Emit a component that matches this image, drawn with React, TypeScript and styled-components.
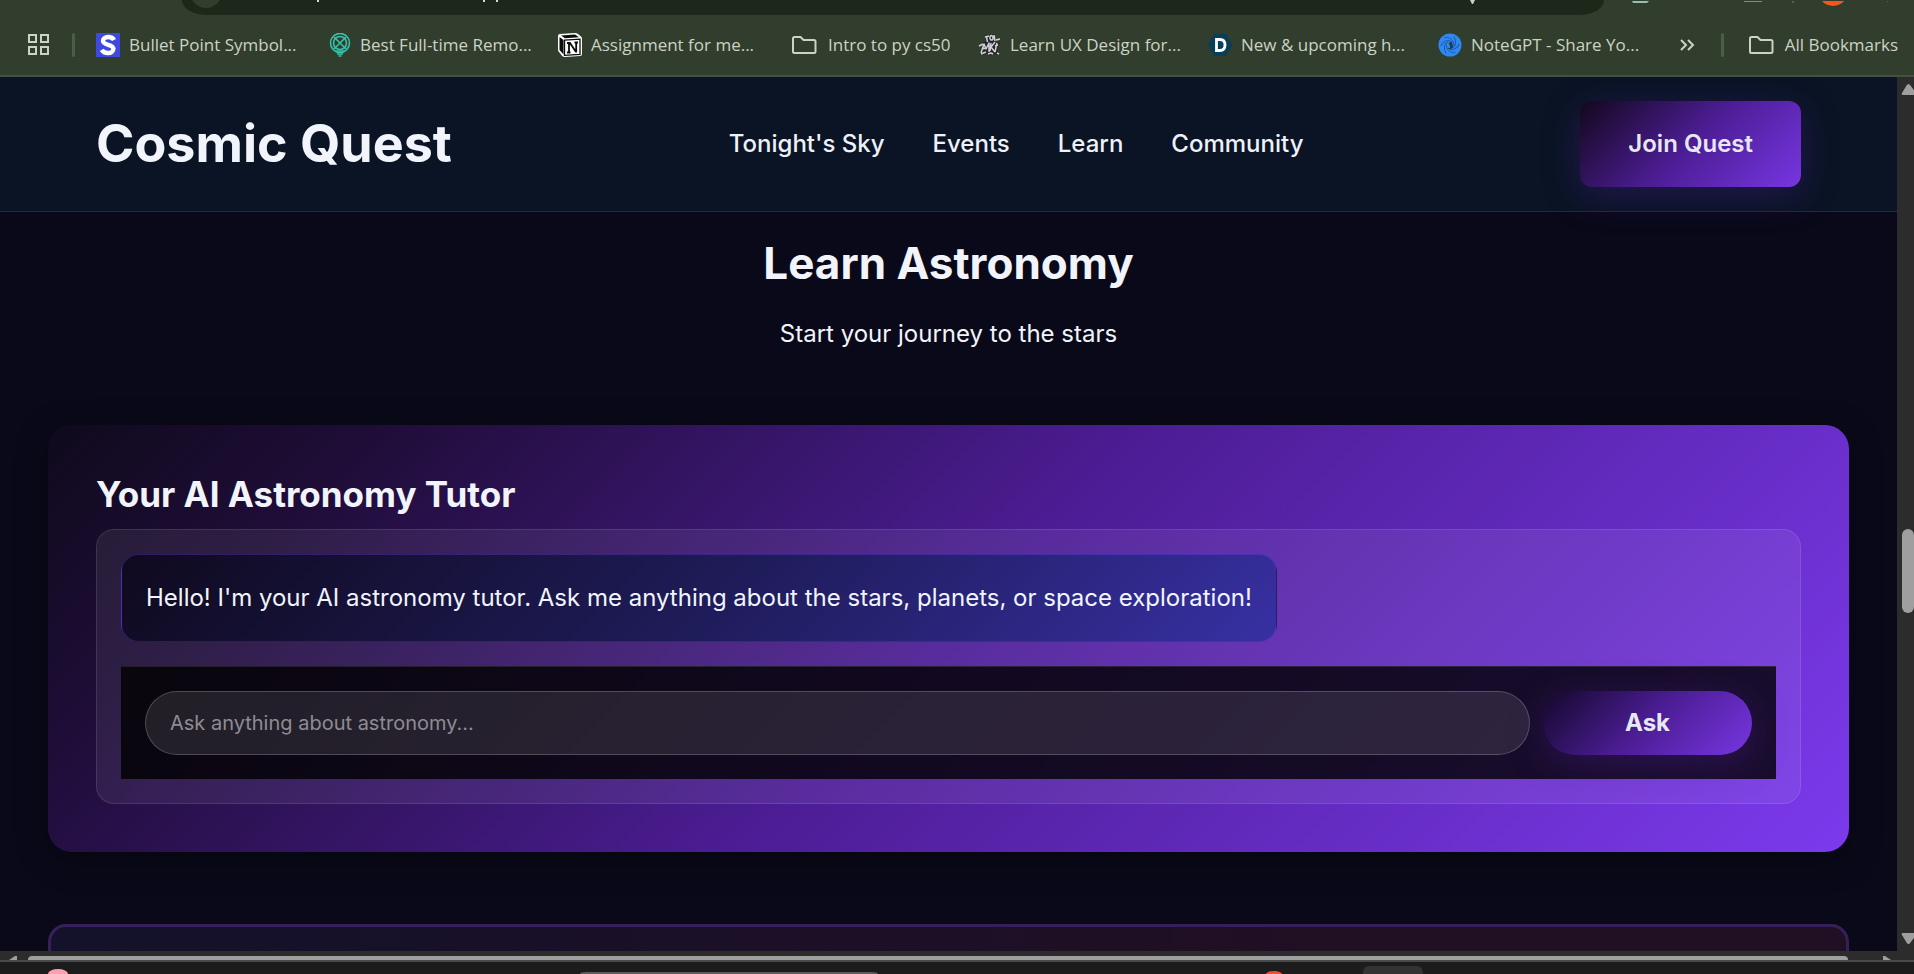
import React from "react";
import styled, { createGlobalStyle } from "styled-components";

const Global = createGlobalStyle`
  *, *::before, *::after { box-sizing: border-box; }
  html, body, #root { height: 100%; }
  body { margin: 0; overflow: hidden; background: #0a0919; color: #f1f5fb; font-family: Inter, sans-serif; }
  h1, h2, h3, p { margin: 0; }
`;

const Screen = styled.div`
  display: flex;
  flex-direction: column;
  height: 100vh;
  overflow: hidden;
`;

/* ---------- browser chrome ---------- */
const Chrome = styled.div`
  flex: none;
  background: #313d2d;
  border-bottom: 2px solid #43523f;
`;
const AddressRow = styled.div`
  display: flex;
  height: 15px;
  padding-left: 182px;
  overflow: hidden;
`;
const AddressBar = styled.div`
  flex: 1;
  display: flex;
  justify-content: space-between;
  background: #1c281a;
  border-radius: 0 0 24px 24px / 0 0 15px 15px;
  overflow: hidden;
`;
const Tools = styled.div`
  flex: none;
  width: 310px;
`;
const Bookmarks = styled.nav`
  display: flex;
  align-items: center;
  height: 60px;
  padding: 0 16px 0 28px;
  font: 400 17px/24px "Open Sans", sans-serif;
  color: #cbd3c4;
`;
const AppsButton = styled.button`
  display: flex;
  padding: 0;
  border: 0;
  background: none;
  color: inherit;
`;
const Divider = styled.span<{ $left: number; $right: number }>`
  flex: none;
  width: 3px;
  height: 24px;
  margin: 0 ${(p) => p.$right}px 0 ${(p) => p.$left}px;
  background: #4b5d47;
  border-radius: 2px;
`;
const Bookmark = styled.a<{ $width?: number }>`
  flex: none;
  display: flex;
  align-items: center;
  gap: 9px;
  width: ${(p) => (p.$width ? `${p.$width}px` : "auto")};
  color: inherit;
  text-decoration: none;
  white-space: nowrap;
  svg { flex: none; }
`;
const Spring = styled.span`
  flex: 1;
`;

/* ---------- page viewport ---------- */
const Viewport = styled.div`
  flex: 1;
  min-height: 0;
  display: flex;
`;
const Page = styled.div`
  flex: 1;
  min-width: 0;
  overflow: hidden;
  background: #0a0919;
`;
const Header = styled.header`
  display: flex;
  justify-content: space-between;
  align-items: center;
  padding: 24px 96px;
  background: #0a1424;
  border-bottom: 1px solid #222b3c;
`;
const Brand = styled.h1`
  font-size: 52px;
  line-height: 64px;
  font-weight: 700;
`;
const Nav = styled.nav`
  display: flex;
  gap: 48px;
`;
const NavLink = styled.a`
  font-size: 24px;
  line-height: 38px;
  font-weight: 500;
  color: #eef2f8;
  text-decoration: none;
`;
const GlowButton = styled.button<{ $pill?: boolean }>`
  flex: none;
  padding: ${(p) => (p.$pill ? "13px 82px" : "24px 48px")};
  border: 0;
  border-radius: ${(p) => (p.$pill ? 32 : 12)}px;
  background: linear-gradient(135deg, ${(p) => (p.$pill ? "#12082a" : "#12081c")} 0%, #4c1d95 50%, #7736e2 100%);
  box-shadow: 0 8px 36px rgba(76, 29, 149, 0.38);
  color: #e6e9f3;
  font: ${(p) => (p.$pill ? 700 : 600)} 24px/38px Inter, sans-serif;
`;
const Learn = styled.main`
  padding: 22px 48px 0;
`;
const Intro = styled.div`
  display: flex;
  flex-direction: column;
  align-items: center;
  gap: 23px;
  padding-bottom: 72px;
`;
const Title = styled.h2`
  font-size: 44px;
  line-height: 58px;
  font-weight: 700;
`;
const Lead = styled.p`
  font-size: 24px;
  line-height: 38px;
`;
const TutorCard = styled.section`
  padding: 48px;
  border-radius: 24px;
  background: linear-gradient(135deg, #0f0a1c 0%, #1f0d38 15%, #4c1d95 50%, #7c3aed 100%);
  box-shadow: 0 8px 32px rgba(0, 0, 0, 0.35);
`;
const CardTitle = styled.h3`
  font-size: 35px;
  line-height: 42px;
  font-weight: 700;
  margin-bottom: 14px;
`;
const Chat = styled.div`
  display: flex;
  flex-direction: column;
  align-items: flex-start;
  gap: 24px;
  padding: 24px;
  border: 1px solid rgba(255, 255, 255, 0.1);
  border-radius: 18px;
  background: rgba(255, 255, 255, 0.07);
`;
const Bubble = styled.p`
  padding: 24px;
  border: 1px solid rgba(124, 58, 237, 0.3);
  border-radius: 18px;
  background: linear-gradient(135deg, #0f0a1e 0%, #1e1b57 50%, #3730a3 100%);
  font-size: 24px;
  line-height: 38px;
`;
const AskForm = styled.form`
  align-self: stretch;
  display: flex;
  gap: 13px;
  padding: 24px;
  border-top: 1px solid rgba(255, 255, 255, 0.1);
  background: rgba(0, 0, 0, 0.8);
`;
const Question = styled.input`
  flex: 1;
  min-width: 0;
  padding: 0 24px;
  border: 1px solid rgba(255, 255, 255, 0.2);
  border-radius: 32px;
  background: rgba(255, 255, 255, 0.1);
  color: #f1f5fb;
  font: 400 20px/38px Inter, sans-serif;
  &::placeholder { color: #8f8b94; opacity: 1; }
`;
const NextCard = styled.section`
  height: 320px;
  margin-top: 72px;
  border: 3px solid #35205a;
  border-radius: 18px;
  background: linear-gradient(90deg, #13112b 0%, #210f24 70%);
`;

/* ---------- scroll bars and task bar ---------- */
const SideTrack = styled.div`
  flex: none;
  display: flex;
  flex-direction: column;
  align-items: flex-end;
  width: 17px;
  padding: 7px 0;
  background: #2c2c2c;
  overflow: hidden;
`;
const SideThumb = styled.div`
  width: 12px;
  height: 84px;
  margin: 433px 0 auto;
  border-radius: 7px;
  background: #9f9f9f;
`;
const BottomTrack = styled.div`
  flex: none;
  display: flex;
  align-items: flex-end;
  height: 9px;
  padding: 0 23px 0 9px;
  background: #2c2c2c;
`;
const BottomThumb = styled.div`
  flex: 1;
  height: 4px;
  margin: 0 35px 0 11px;
  border-radius: 6px 6px 0 0;
  background: #9f9f9f;
`;
const Taskbar = styled.footer`
  flex: none;
  display: flex;
  align-items: flex-end;
  height: 14px;
  border-top: 2px solid #4a4a4a;
  background: #1c1c1c;
`;
const TaskItem = styled.span<{ $width: number; $height: number; $left: number; $radius: string; $color: string }>`
  flex: none;
  width: ${(p) => p.$width}px;
  height: ${(p) => p.$height}px;
  margin-left: ${(p) => p.$left}px;
  border-radius: ${(p) => p.$radius};
  background: ${(p) => p.$color};
`;

const Folder = () => (
  <svg width="28" height="20" viewBox="0 0 28 20" fill="none" stroke="#cbd3c4" strokeWidth="2" strokeLinejoin="round">
    <path d="M3.500 2h6l3 3h10.500a1.500 1.500 0 0 1 1.500 1.500v10a1.500 1.500 0 0 1-1.500 1.500h-19.500a1.500 1.500 0 0 1-1.500-1.500V3.500a1.500 1.500 0 0 1 1.500-1.500z" />
  </svg>
);

export default function App() {
  return (
    <Screen>
      <Global />
      <Chrome>
        <AddressRow>
          <AddressBar>
            <svg width="330" height="15" fill="none">
              <circle cx="24" cy="-8" r="16" fill="#313d2d" />
              <path d="M136 0v2M302 0v2M315 0v2" stroke="#d5dccd" strokeWidth="2" />
            </svg>
            <svg width="140" height="15">
              <path d="M6 0h5l-2 4h-1z" fill="#cbd3c4" />
            </svg>
          </AddressBar>
          <Tools>
            <svg width="310" height="15">
              <path d="M28 0h17l-2 2H29z" fill="#8fc1b6" />
              <path d="M140 0h18v1h-18z" fill="#7f8f78" />
              <path d="M188 0h2v2h-2zM283 0h1v1h-1z" fill="#53654e" />
              <circle cx="229" cy="-10" r="15" fill="#f9541c" />
            </svg>
          </Tools>
        </AddressRow>
        <Bookmarks aria-label="Bookmarks">
          <AppsButton aria-label="Apps">
            <svg width="22" height="22" fill="none" stroke="#cbd3c4" strokeWidth="2">
              <path d="M1 1h7v7H1zM13 1h7v7h-7zM1 13h7v7H1zM13 13h7v7h-7z" />
            </svg>
          </AppsButton>
          <Divider $left={22} $right={21} />
          <Bookmark href="#" $width={233}>
            <svg width="24" height="24">
              <rect width="24" height="24" fill="#3f49e0" />
              <path d="M18 7C17 5 14.500 4 12 4c-3 0-5 1.700-5 3.800 0 5 10.400 3 10.400 8 0 2.600-2.400 4.200-5.400 4.200-2.700 0-5-1-6.300-3.200" fill="none" stroke="#fff" strokeWidth="4.400" />
            </svg>
            Bullet Point Symbol...
          </Bookmark>
          <Bookmark href="#" $width={229}>
            <svg width="22" height="24" fill="none" stroke="#35c2ac" strokeWidth="1.600">
              <circle cx="11" cy="10" r="9.500" />
              <circle cx="11" cy="10" r="6.500" />
              <path d="M5 4l12 12M17 4L5 16M6 18h10M8 21h6M9.500 23h3" />
            </svg>
            Best Full-time Remo...
          </Bookmark>
          <Bookmark href="#" $width={233}>
            <svg width="24" height="24">
              <path d="M2 1L17 0q2 0 3 1l3 2.500q1 .8 1 2V21q0 1.800-2 2L7 24q-2 0-3-1.200L1 19q-1-1-1-2.200V3q0-1.800 2-2z" fill="#fff" />
              <path d="M3 2.600l14-1.100 4 2.700L7 5.200zM1.500 4l4 3v14.500l-4-4.500z" fill="#0b0b0b" />
              <path d="M6.500 7.200l15.500-1v15.300L6.500 22.400z" fill="#fff" stroke="#0b0b0b" strokeWidth="1.300" />
              <path d="M9 10h3.600M16.500 9.500h3.500M9 19.500h3.500M11 10v9.500M12 10l6 9M18.200 9.500v10" stroke="#0b0b0b" strokeWidth="1.800" fill="none" />
            </svg>
            Assignment for me...
          </Bookmark>
          <Bookmark href="#" $width={187}>
            <Folder />
            Intro to py cs50
          </Bookmark>
          <Bookmark href="#" $width={230}>
            <svg width="23" height="24" viewBox="0 0 23 24" fill="none" strokeLinejoin="round">
              <path d="M7 2l9-1 2 8 4 1-3 5 2 7-6-1-3 2-3-2-7 1 2-7 1-6 3-1z" fill="#26262b" />
              <path d="M7 4l4-1M8.500 4l1 5M13 2.500c-2 1-1 5 1 4.500s1-5-1-4.500M16 2l1 6M3 20l3-9 2 5 3-6v9M4 16l4-1M13 10l-1 8M17 9l-4 5 4 5M19 10l-2 9M20 12l-3 1M1 13l4-2M18 7l4-1M3 21l5-2M10 21l3-1 2 1M19 20l2 1" stroke="#cfd1d6" strokeWidth="1.500" />
            </svg>
            Learn UX Design for...
          </Bookmark>
          <Bookmark href="#" $width={230}>
            <svg width="24" height="24" viewBox="0 0 24 24">
              <path d="M6 1h12l6 11-6 11H6L0 12z" fill="#073f58" />
              <path d="M8.500 6.500h3.500c3.500 0 5 2.400 5 5.500s-1.500 5.500-5 5.500H8.500z" fill="none" stroke="#fff" strokeWidth="2.800" />
            </svg>
            New &amp; upcoming h...
          </Bookmark>
          <Bookmark href="#">
            <svg width="24" height="24" viewBox="0 0 24 24" fill="none">
              <circle cx="12" cy="12" r="11.500" fill="#2f88f2" />
              {[0, 60, 120, 180, 240, 300].map((angle) => (
                <path
                  key={angle}
                  d="M15.500 12c1-4-3-8-9-7.500"
                  transform={`rotate(${angle} 12 12)`}
                  stroke="#1f5ca8"
                  strokeWidth="1"
                />
              ))}
              <path d="M14.800 9.500c-3-1.500-5 .5-3.300 2.500s.3 4-2.500 2.500c2 2.500 6 1.500 6-1.500 0-1.600-1.600-2-.2-3.500z" fill="#243b4d" />
            </svg>
            NoteGPT - Share Yo...
          </Bookmark>
          <Spring />
          <AppsButton aria-label="More bookmarks">
            <svg width="15" height="12" fill="none" stroke="#cbd3c4" strokeWidth="2">
              <path d="M1 1l5 5-5 5M8 1l5 5-5 5" />
            </svg>
          </AppsButton>
          <Divider $left={26} $right={24} />
          <Bookmark href="#">
            <Folder />
            All Bookmarks
          </Bookmark>
        </Bookmarks>
      </Chrome>

      <Viewport>
        <Page>
          <Header>
            <Brand>Cosmic Quest</Brand>
            <Nav aria-label="Main">
              <NavLink href="#sky">Tonight's Sky</NavLink>
              <NavLink href="#events">Events</NavLink>
              <NavLink href="#learn">Learn</NavLink>
              <NavLink href="#community">Community</NavLink>
            </Nav>
            <GlowButton type="button">Join Quest</GlowButton>
          </Header>
          <Learn id="learn">
            <Intro>
              <Title>Learn Astronomy</Title>
              <Lead>Start your journey to the stars</Lead>
            </Intro>
            <TutorCard>
              <CardTitle>Your AI Astronomy Tutor</CardTitle>
              <Chat>
                <Bubble>
                  Hello! I'm your AI astronomy tutor. Ask me anything about the stars, planets, or space exploration!
                </Bubble>
                <AskForm onSubmit={(e: React.FormEvent) => e.preventDefault()}>
                  <Question aria-label="Question" placeholder="Ask anything about astronomy..." />
                  <GlowButton $pill>Ask</GlowButton>
                </AskForm>
              </Chat>
            </TutorCard>
            <NextCard />
          </Learn>
        </Page>
        <SideTrack>
          <svg width="13" height="12" viewBox="0 0 13 12">
            <path d="M7.500 0q1 0 2 1.500L15 9q1 2-1 2H2q-2 0-1-2L5.500 1.500Q6.500 0 7.500 0z" fill="#9f9f9f" />
          </svg>
          <SideThumb />
          <svg width="13" height="12" viewBox="0 0 13 12">
            <path d="M7.500 12q1 0 2-1.500L15 3q1-2-1-2H2Q0 1 1 3l4.500 7.500q1 1.500 2 1.500z" fill="#9f9f9f" />
          </svg>
        </SideTrack>
      </Viewport>
      <BottomTrack>
        <svg width="8" height="4"><path d="M0 4L6 0h2v4z" fill="#9f9f9f" /></svg>
        <BottomThumb />
        <svg width="8" height="4"><path d="M0 4V0h2l6 4z" fill="#9f9f9f" /></svg>
      </BottomTrack>
      <Taskbar>
        <TaskItem $width={20} $height={5} $left={48} $radius="10px 10px 0 0 / 5px 5px 0 0" $color="#ff9fb0" />
        <TaskItem $width={298} $height={2} $left={512} $radius="6px 6px 0 0 / 2px 2px 0 0" $color="#5c5c5c" />
        <TaskItem $width={16} $height={3} $left={388} $radius="8px 8px 0 0 / 3px 3px 0 0" $color="#ee5428" />
        <TaskItem $width={60} $height={8} $left={81} $radius="6px 6px 0 0" $color="#333333" />
      </Taskbar>
    </Screen>
  );
}
